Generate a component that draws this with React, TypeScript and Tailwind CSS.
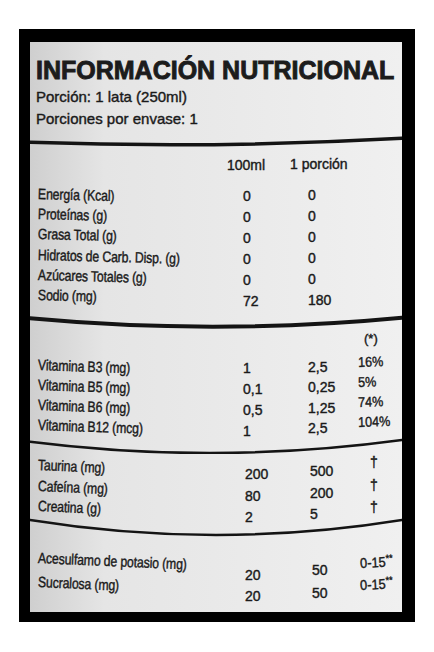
import type { ReactNode } from 'react';

function Stack({ items, className }: { items: ReactNode[]; className: string }) {
  return (
    <div className={`flex flex-col shrink-0 ${className}`}>
      {items.map((it, i) => (
        <div key={i} className="whitespace-nowrap">
          {it}
        </div>
      ))}
    </div>
  );
}

function Tilt({ children, cls }: { children: ReactNode; cls: string }) {
  return <span className={`inline-block origin-left ${cls}`}>{children}</span>;
}

function Rule({ h, d, w }: { h: number; d: string; w: number }) {
  return (
    <svg width={372} height={h} viewBox={`0 0 372 ${h}`} className="block shrink-0">
      <path d={d} fill="none" stroke="#141414" strokeWidth={w} strokeLinecap="round" />
    </svg>
  );
}

const nutrients = [
  'Energía (Kcal)',
  'Proteínas (g)',
  'Grasa Total (g)',
  'Hidratos de Carb. Disp. (g)',
  'Azúcares Totales (g)',
  'Sodio (mg)',
];

const vitamins = ['Vitamina B3 (mg)', 'Vitamina B5 (mg)', 'Vitamina B6 (mg)', 'Vitamina B12 (mcg)'];

const others = ['Taurina (mg)', 'Cafeína (mg)', 'Creatina (g)'];

const sweeteners = ['Acesulfamo de potasio (mg)', 'Sucralosa (mg)'];

export default function App() {
  return (
    <div className="w-[434px] h-[652px] bg-white pt-[29px] pl-[19px] font-['Liberation_Sans',Arial,sans-serif]">
      <div className="w-[396px] h-[593px] bg-black pt-[13px] pl-[11px]">
        <div className="w-[372px] h-[570px] flex flex-col overflow-hidden bg-linear-to-r from-[#cfcfcf] from-0% via-[#e5e5e5] via-20% to-[#f0f0f0] text-[#1a1a1a] [-webkit-text-stroke:0.4px_#1a1a1a]">
          {/* encabezado */}
          <div className="pt-[16px] pl-[6px] shrink-0">
            <div className="text-[25px] leading-[25px] font-bold text-[#1c1c1c] [-webkit-text-stroke:0.9px_#1c1c1c]">
              INFORMACIÓN NUTRICIONAL
            </div>
            <div className="mt-[3px] text-[15px] leading-[22px]">Porción: 1 lata (250ml)</div>
            <div className="text-[15px] leading-[22px]">Porciones por envase: 1</div>
          </div>

          <div className="mt-[6px]">
            <Rule h={12} d="M0 6.3 Q186 12.7 372 2.3" w={3.5} />
          </div>

          <div className="flex mt-[7px] h-[20px] leading-[20px] text-[14px] shrink-0">
            <span className="ml-[197px] w-[63px]">100ml</span>
            <span className="-mt-[1px]">1 porción</span>
          </div>

          {/* nutrientes */}
          <div className="flex h-[139px] shrink-0 text-[14px]">
            <Stack
              className="w-[213px] pl-2 pt-[9px] leading-[20.2px] text-[15px] tracking-[-0.2px]"
              items={nutrients.map((n) => (
                <Tilt cls="rotate-[1.5deg] scale-x-[0.82]">{n}</Tilt>
              ))}
            />
            <Stack className="w-[65px] pt-[11px] leading-[21.1px]" items={['0', '0', '0', '0', '0', '72']} />
            <Stack className="w-[50px] pt-[9.5px] leading-[21.1px]" items={['0', '0', '0', '0', '0', '180']} />
          </div>

          <Rule h={16} d="M0 4.3 Q186 21.4 372 3.7" w={4} />

          {/* vitaminas */}
          <div className="flex h-[106px] shrink-0 text-[14px]">
            <Stack
              className="w-[213px] pl-2 pt-[25px] leading-[20px] text-[15px] tracking-[-0.2px]"
              items={vitamins.map((n) => (
                <Tilt cls="rotate-[2deg] scale-x-[0.82]">{n}</Tilt>
              ))}
            />
            <Stack className="w-[65px] pt-[27.5px] leading-[21.3px]" items={['1', '0,1', '0,5', '1']} />
            <Stack className="w-[50px] pt-[27px] leading-[20.3px]" items={['2,5', '0,25', '1,25', '2,5']} />
            <div className="flex-1 flex flex-col -mt-[1px] leading-[20px]">
              <div className="ml-[6px] text-[13px]">(*)</div>
              <Stack
                className="mt-[3px]"
                items={['16%', '5%', '74%', '104%'].map((p) => (
                  <Tilt cls="-rotate-[2deg] scale-x-[0.9]">{p}</Tilt>
                ))}
              />
            </div>
          </div>

          <Rule h={18} d="M0 5.7 Q186 29.2 372 4" w={2.5} />

          {/* otros */}
          <div className="flex h-[60px] shrink-0 text-[14px]">
            <Stack
              className="w-[213px] pl-2 pt-[1px] leading-[20.5px] text-[15px] tracking-[-0.2px]"
              items={others.map((n) => (
                <Tilt cls="rotate-[2.5deg] scale-x-[0.82]">{n}</Tilt>
              ))}
            />
            <Stack className="w-[65px] pl-[2px] pt-[10.4px] leading-[21.5px]" items={['200', '80', '2']} />
            <Stack className="w-[50px] pl-[2px] pt-[7.4px] leading-[21.5px]" items={['500', '200', '5']} />
            <Stack className="pl-[12px] -mt-[3px] leading-[22.5px]" items={['†', '†', '†']} />
          </div>

          <Rule h={24} d="M0 6 Q186 36 372 6" w={2.5} />

          {/* edulcorantes */}
          <div className="flex flex-1 text-[14px]">
            <Stack
              className="w-[213px] pl-2 pt-[8px] leading-[24px] text-[15px] tracking-[-0.2px]"
              items={sweeteners.map((n) => (
                <Tilt cls="rotate-[2.5deg] scale-x-[0.82]">{n}</Tilt>
              ))}
            />
            <Stack className="w-[65px] pl-[2px] pt-[26.5px] leading-[21px]" items={['20', '20']} />
            <Stack className="w-[50px] pl-[4px] pt-[20.65px] leading-[23px]" items={['50', '50']} />
            <Stack
              className="pl-[2px] pt-[14px] leading-[22px]"
              items={[0, 1].map(() => (
                <Tilt cls="-rotate-[3deg] scale-x-[0.92]">
                  0-15<sup className="text-[10px]">**</sup>
                </Tilt>
              ))}
            />
          </div>
        </div>
      </div>
    </div>
  );
}
